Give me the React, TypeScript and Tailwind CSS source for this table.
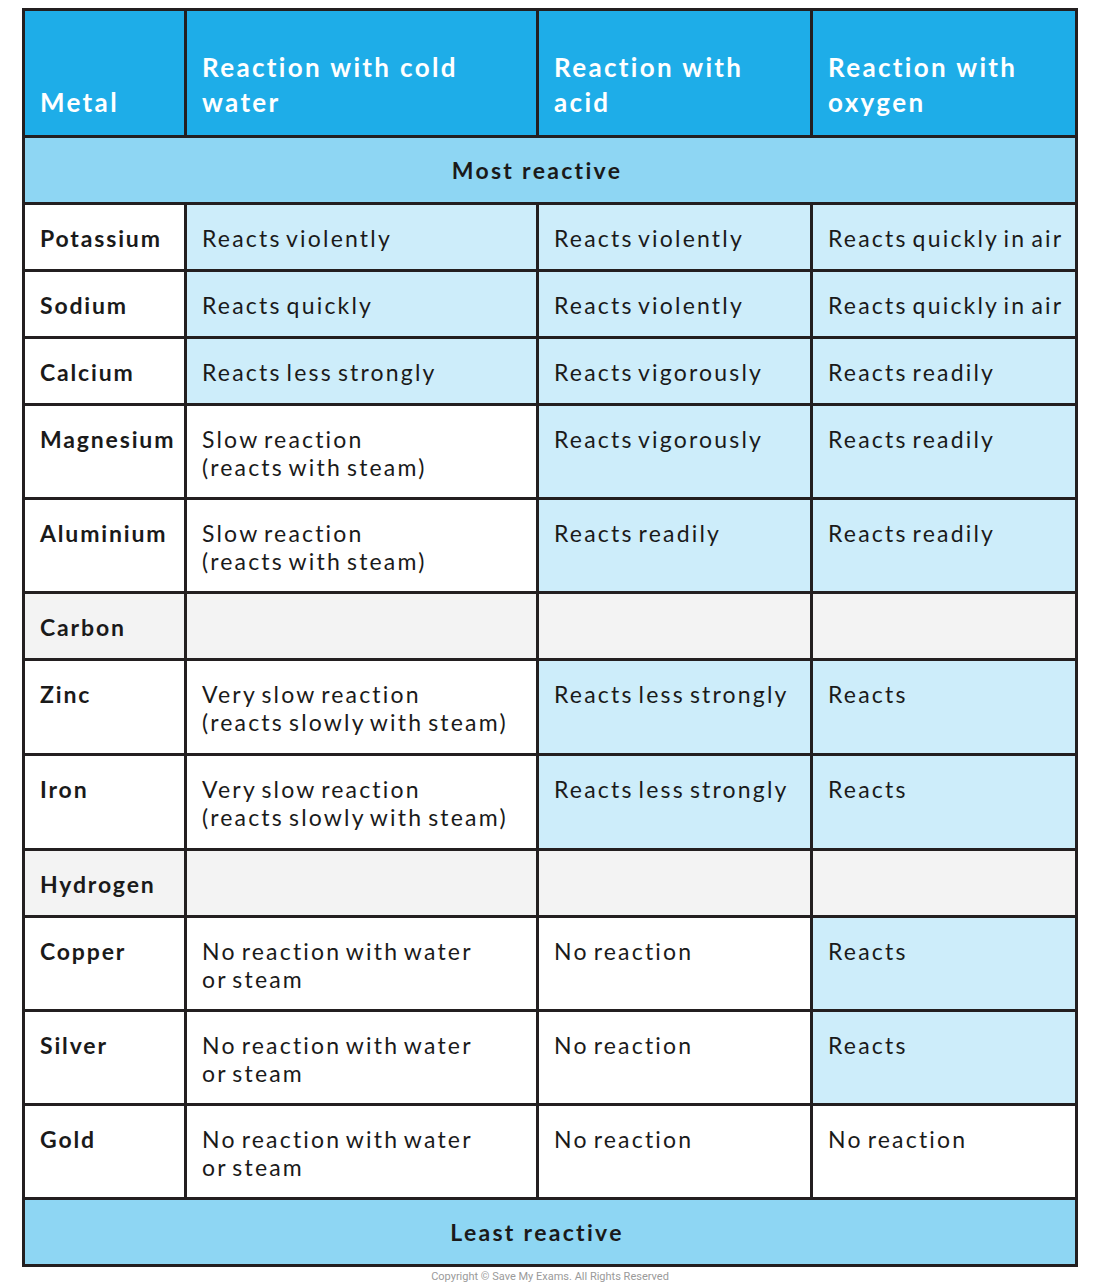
import React from "react";

type Tone = "w" | "b" | "g";

interface Row {
  metal: string;
  cells: [string, string, string];
  tones: [Tone, Tone, Tone];
  h: string;
  gray?: boolean;
}

const rows: Row[] = [
  { metal: "Potassium", cells: ["Reacts violently", "Reacts violently", "Reacts quickly in air"], tones: ["b", "b", "b"], h: "h-[64px]" },
  { metal: "Sodium", cells: ["Reacts quickly", "Reacts violently", "Reacts quickly in air"], tones: ["b", "b", "b"], h: "h-[64px]" },
  { metal: "Calcium", cells: ["Reacts less strongly", "Reacts vigorously", "Reacts readily"], tones: ["b", "b", "b"], h: "h-[64px]" },
  { metal: "Magnesium", cells: ["Slow reaction\n(reacts with steam)", "Reacts vigorously", "Reacts readily"], tones: ["w", "b", "b"], h: "h-[91px]" },
  { metal: "Aluminium", cells: ["Slow reaction\n(reacts with steam)", "Reacts readily", "Reacts readily"], tones: ["w", "b", "b"], h: "h-[91px]" },
  { metal: "Carbon", cells: ["", "", ""], tones: ["g", "g", "g"], h: "h-[64px]", gray: true },
  { metal: "Zinc", cells: ["Very slow reaction\n(reacts slowly with steam)", "Reacts less strongly", "Reacts"], tones: ["w", "b", "b"], h: "h-[92px]" },
  { metal: "Iron", cells: ["Very slow reaction\n(reacts slowly with steam)", "Reacts less strongly", "Reacts"], tones: ["w", "b", "b"], h: "h-[92px]" },
  { metal: "Hydrogen", cells: ["", "", ""], tones: ["g", "g", "g"], h: "h-[64px]", gray: true },
  { metal: "Copper", cells: ["No reaction with water\nor steam", "No reaction", "Reacts"], tones: ["w", "w", "b"], h: "h-[91px]" },
  { metal: "Silver", cells: ["No reaction with water\nor steam", "No reaction", "Reacts"], tones: ["w", "w", "b"], h: "h-[91px]" },
  { metal: "Gold", cells: ["No reaction with water\nor steam", "No reaction", "No reaction"], tones: ["w", "w", "w"], h: "h-[91px]" },
];

const toneClass: Record<Tone, string> = {
  w: "bg-white",
  b: "bg-[#cdedfa]",
  g: "bg-[#f3f3f3]",
};

export default function App() {
  return (
    <div className="w-[1100px] bg-white pt-2" style={{ fontFamily: "Lato, 'Open Sans', sans-serif" }}>
      <div className="ml-[22px] w-[1056px] bg-[#231f20] p-[3px] grid grid-cols-[159px_349px_271px_262px] gap-[3px] text-[#1a1a1a]">
        {/* Header */}
        {["Metal", "Reaction with cold\nwater", "Reaction with\nacid", "Reaction with\noxygen"].map((h) => (
          <div
            key={h}
            className="h-[124px] bg-[#1eade8] flex items-end px-[15px] pb-[15px] text-white font-bold text-[26px] leading-[35px] tracking-[0.09em] whitespace-pre-line"
          >
            {h}
          </div>
        ))}

        <div className="col-span-4 h-[64px] bg-[#8ed6f3] flex items-center justify-center pr-[26px] font-bold text-[23px] tracking-[0.1em]">
          Most reactive
        </div>

        {rows.map((r) => (
          <React.Fragment key={r.metal}>
            <div
              className={`${r.h} ${r.gray ? "bg-[#f3f3f3]" : "bg-white"} px-[15px] pt-[19px] font-bold text-[23px] leading-[28px] tracking-[0.08em] whitespace-nowrap`}
            >
              {r.metal}
            </div>
            {r.cells.map((c, i) => (
              <div
                key={i}
                className={`${r.h} ${toneClass[r.tones[i]]} pl-[15px] pt-[19px] text-[23px] leading-[28px] tracking-[0.095em] [word-spacing:-3px] whitespace-pre overflow-hidden`}
              >
                {c}
              </div>
            ))}
          </React.Fragment>
        ))}

        <div className="col-span-4 h-[64px] bg-[#8ed6f3] flex items-center justify-center pr-[26px] font-bold text-[23px] tracking-[0.1em]">
          Least reactive
        </div>
      </div>
      <div
        className="w-[1100px] text-center text-[11px] leading-[20px] text-[#9a9a9a]"
        style={{ fontFamily: "Roboto, sans-serif" }}
      >
        Copyright © Save My Exams. All Rights Reserved
      </div>
    </div>
  );
}
